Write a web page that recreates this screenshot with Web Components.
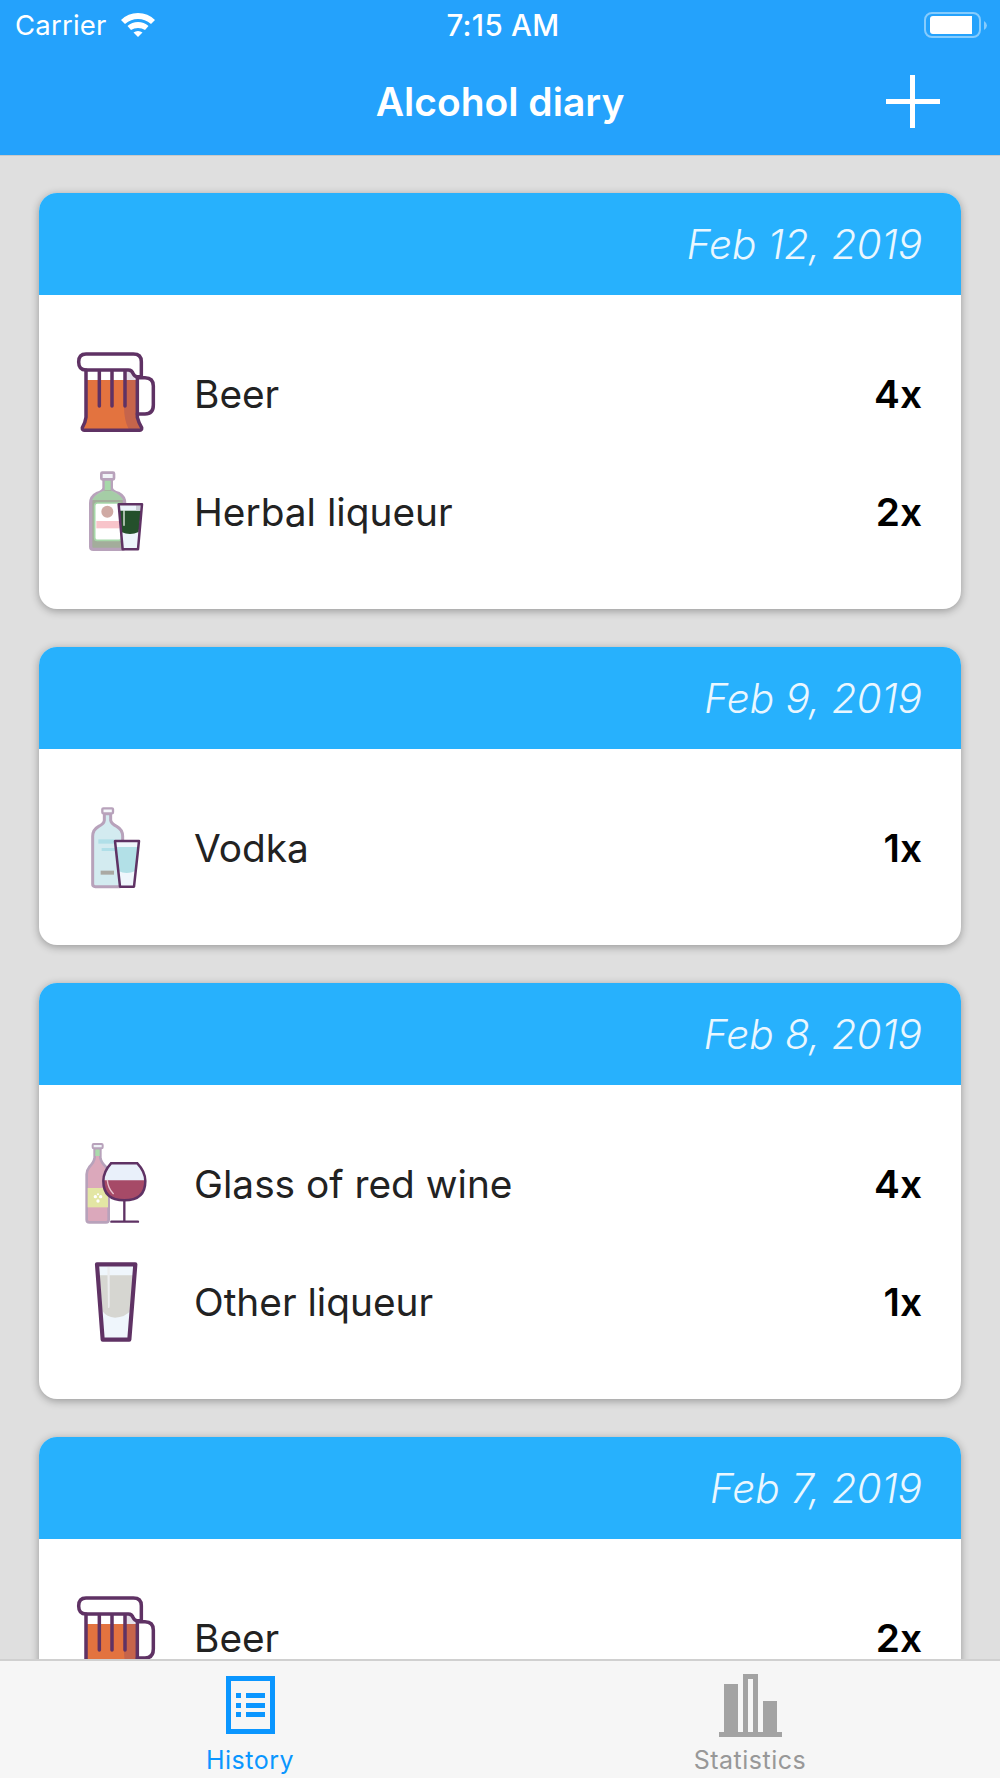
<!DOCTYPE html>
<html>
<head>
<meta charset="utf-8">
<title>Alcohol diary</title>
<style>
  html, body { margin: 0; padding: 0; background: #dfdfdf; }
  body { font-family: "Inter", "Liberation Sans", sans-serif; }
</style>
</head>
<body>
<diary-app>
  <diary-header slot="header" title="Alcohol diary"></diary-header>

  <diary-card date="Feb 12, 2019">
    <diary-row icon="beer" name="Beer" count="4x"></diary-row>
    <diary-row icon="herbal" name="Herbal liqueur" count="2x"></diary-row>
  </diary-card>
  <diary-card date="Feb 9, 2019">
    <diary-row icon="vodka" name="Vodka" count="1x"></diary-row>
  </diary-card>
  <diary-card date="Feb 8, 2019">
    <diary-row icon="wine" name="Glass of red wine" count="4x"></diary-row>
    <diary-row icon="other" name="Other liqueur" count="1x"></diary-row>
  </diary-card>
  <diary-card date="Feb 7, 2019">
    <diary-row icon="beer" name="Beer" count="2x"></diary-row>
  </diary-card>

  <diary-tabs slot="tabs">
    <diary-tab label="History" icon="history" active></diary-tab>
    <diary-tab label="Statistics" icon="stats"></diary-tab>
  </diary-tabs>
</diary-app>

<script>
const PURPLE = '#5f3264';
const LILAC = '#b8a2bb';

// icons are drawn in the coordinates of a 270 unit box (3 units = 1px)
const DRINKS = {
  beer: `<svg viewBox="63 54 270 270">
    <path d="M108 150H262V262L275 297H95L108 262Z" fill="#e3733f"/>
    <path d="M222 150H262V262L275 297H236Q222 270 222 230Z" fill="#c6644b"/>
    <path d="M228 124H245L256 150H228Z" fill="#e4dfe9"/>
    <g fill="none" stroke="${PURPLE}" stroke-width="10.500" stroke-linecap="round" stroke-linejoin="round">
      <path d="M108 120V262Q106 278 97 293Q96 301 104 301H268Q276 301 275 293Q266 278 262 262V140"/>
      <path d="M262 143H285Q310 143 310 168V225Q310 252 285 252H262"/>
      <path d="M108 120H235Q246 120 250 132Q254 140 262 140H274V95Q274 72 250 72H108Q86 72 86 96Q86 120 108 120"/>
      <path d="M148 124V228M186 124V228M225 124V228"/>
    </g>
  </svg>`,
  herbal: `<svg viewBox="63 408 270 270">
    <path d="M162 446H184V474Q186 484 205 490Q224 500 224 520V650Q224 658 215 658H130Q122 658 122 650V520Q122 500 142 490Q160 484 162 474Z" fill="#a3ad9b" stroke="${LILAC}" stroke-width="10" stroke-linejoin="round"/>
    <path d="M164 446H182V480H164Z" fill="#a6d8a9"/>
    <path d="M126 510Q135 492 160 482H186Q210 492 220 510Z" fill="#a6d8a9" opacity=".75"/>
    <rect x="154" y="428" width="38" height="20" rx="3" fill="#f1f4f8" stroke="${LILAC}" stroke-width="8"/>
    <rect x="134" y="519" width="80" height="112" rx="8" fill="#fff" stroke="#a6d8a9" stroke-width="5"/>
    <circle cx="172" cy="545" r="18" fill="#cfaaa4"/>
    <rect x="139" y="573" width="70" height="22" fill="#f8c4ca"/>
    <path d="M206 523H276L264 658H218Z" fill="#edf4fb"/>
    <path d="M209 542H273L266 606Q240 618 214 606Z" fill="#24502b"/>
    <path d="M258 526H273L272 542H258Z" fill="#c9ced6"/>
    <path d="M222 542V586" stroke="#e8f1e8" stroke-width="4" stroke-linecap="round"/>
    <path d="M206 523H276L264 658H218Z" fill="none" stroke="${PURPLE}" stroke-width="7.500" stroke-linejoin="round"/>
  </svg>`,
  vodka: `<svg viewBox="63 33 270 270">
    <path d="M163 68H182V88Q184 98 200 106Q218 116 218 136V280Q218 287 210 287H136Q128 287 128 280V136Q128 116 146 106Q162 98 163 88Z" fill="#d3ebf0" stroke="${LILAC}" stroke-width="9" stroke-linejoin="round"/>
    <rect x="157" y="52" width="32" height="15" rx="3" fill="#f4f8fb" stroke="${LILAC}" stroke-width="7"/>
    <rect x="145" y="145" width="48" height="13" fill="#b0dfe8"/>
    <rect x="155" y="171" width="40" height="9" fill="#b0dfe8"/>
    <rect x="152" y="239" width="40" height="12" fill="#aaa9a3"/>
    <path d="M195 150H267L252 287H210Z" fill="#eff6fc"/>
    <path d="M198 168H264L256 240Q230 252 205 240Z" fill="#b2e0e7"/>
    <path d="M195 150H267L252 287H210Z" fill="none" stroke="${PURPLE}" stroke-width="7.500" stroke-linejoin="round"/>
  </svg>`,
  wine: `<svg viewBox="63 21 270 270">
    <path d="M134 52H151V80Q153 94 168 108Q176 118 176 130V266Q176 274 168 274H118Q110 274 110 266V130Q110 118 118 108Q132 94 134 80Z" fill="#dba8bb" stroke="${LILAC}" stroke-width="8" stroke-linejoin="round"/>
    <rect x="136" y="55" width="13" height="20" fill="#a9dbab"/>
    <rect x="128" y="39" width="30" height="13" rx="3" fill="#eef2f6" stroke="${LILAC}" stroke-width="6"/>
    <rect x="113" y="171" width="61" height="58" fill="#e3e6a4"/>
    <g fill="#fff"><circle cx="136" cy="197" r="5"/><circle cx="152" cy="197" r="5"/><circle cx="144" cy="210" r="5"/><circle cx="144" cy="190" r="3"/></g>
    <path d="M183 97H262Q286 122 286 150Q286 208 223 208Q160 208 160 150Q160 122 183 97Z" fill="#e9f0fa"/>
    <path d="M160 148H286Q286 208 223 208Q160 208 160 148Z" fill="#a64a67"/>
    <path d="M172 148Q174 172 190 188" fill="none" stroke="#e9c3cf" stroke-width="4" stroke-linecap="round"/>
    <path d="M183 97H262Q286 122 286 150Q286 208 223 208Q160 208 160 150Q160 122 183 97Z" fill="none" stroke="${PURPLE}" stroke-width="7.500"/>
    <path d="M223 208V272M184 272H264" fill="none" stroke="${PURPLE}" stroke-width="7" stroke-linecap="round"/>
  </svg>`,
  other: `<svg viewBox="63 375 270 270">
    <path d="M141 400H256L238 626H158Z" fill="#eff6fc"/>
    <path d="M148 433H249L243 538Q225 560 195 560Q170 558 157 540Z" fill="#d6d6d1"/>
    <path d="M172 408H179V524Q179 534 174 530Z" fill="#ecedee"/>
    <path d="M141 400H256L238 626H158Z" fill="none" stroke="${PURPLE}" stroke-width="12.500" stroke-linejoin="round"/>
  </svg>`
};

const TAB_ICONS = {
  history: `<svg style="margin-bottom:3px" width="49" height="58" viewBox="0 0 49 58" fill="#0a96ff">
    <path fill-rule="evenodd" d="M0 0H49V58H0ZM5 5V53H44V5Z"/>
    <path d="M10 17H15V22H10ZM20 17H39V22H20ZM10 27H15V32H10ZM20 27H39V32H20ZM10 36H15V41H10ZM20 36H39V41H20Z"/>
  </svg>`,
  stats: `<svg width="63" height="63" viewBox="0 0 63 63" fill="#a3a3a3">
    <path d="M0 58H63V63H0ZM5 10H19V58H5ZM44 27H58V58H44Z"/>
    <path fill-rule="evenodd" d="M24 0H39V58H24ZM29 5V58H34V5Z"/>
  </svg>`
};

customElements.define('diary-app', class extends HTMLElement {
  constructor() {
    super();
    this.attachShadow({mode: 'open'}).innerHTML = `
      <style>
        :host { display: flex; flex-direction: column; width: 1000px; height: 1778px; overflow: hidden; background: #dfdfdf; }
        main { flex: 1; min-height: 0; overflow: hidden; padding: 38px 39px 0; display: flex; flex-direction: column; gap: 38px; }
      </style>
      <slot name="header"></slot>
      <main><slot></slot></main>
      <slot name="tabs"></slot>
    `;
  }
});

customElements.define('diary-header', class extends HTMLElement {
  constructor() {
    super();
    this.attachShadow({mode: 'open'}).innerHTML = `
      <style>
        :host { display: block; height: 155px; background: #24a2fc; color: #fff; flex: none; box-shadow: 0 1px 0 #c9c9c9; position: relative; }
        .status { height: 53px; box-sizing: border-box; display: grid; grid-template-columns: 1fr auto 1fr; align-items: center; padding: 0 12px 3px 15px; font-size: 27.500px; }
        .left { display: flex; align-items: center; gap: 14px; letter-spacing: .2px; }
        .time { font-size: 29.500px; font-weight: 500; letter-spacing: .3px; margin-left: 3px; }
        .right { display: flex; justify-content: flex-end; }
        .nav { height: 102px; display: grid; grid-template-columns: 1fr auto 1fr; align-items: center; }
        .nav h1 { margin: 0; font-size: 39px; font-weight: 600; margin-bottom: 5px; }
        .plus { justify-self: end; margin: 0 60px 6px 0; display: block; }
      </style>
      <div class="status">
        <div class="left">Carrier
          <svg width="34" height="24" viewBox="0 0 34 24" fill="#fff">
            <path d="M17 0Q27 0 34 7L30 11Q24 6 17 6Q10 6 4 11L0 7Q7 0 17 0Z"/>
            <path d="M17 9Q23 9 27.5 13L24 17Q21 15 17 15Q13 15 10 17L6.5 13Q11 9 17 9Z"/>
            <path d="M17 18Q19.500 18 21.500 19.500L17 24L12.500 19.500Q14.500 18 17 18Z"/>
          </svg>
        </div>
        <div class="time">7:15 AM</div>
        <div class="right">
          <svg width="64" height="26" viewBox="0 0 64 26">
            <rect x="1" y="1" width="55" height="24" rx="7" fill="none" stroke="#fff" stroke-opacity=".45" stroke-width="2"/>
            <path d="M6 7Q6 4 9 4H48V22H9Q6 22 6 19Z" fill="#fff"/>
            <path d="M60 9Q63 11 63 13.500Q63 16 60 18Z" fill="#fff" fill-opacity=".45"/>
          </svg>
        </div>
      </div>
      <div class="nav">
        <span></span>
        <h1>${this.getAttribute('title')}</h1>
        <svg class="plus" width="54" height="53" viewBox="0 0 54 53" fill="#fff"><path d="M24 0H29V24H54V29H29V53H24V29H0V24H24Z"/></svg>
      </div>
    `;
  }
});

customElements.define('diary-card', class extends HTMLElement {
  constructor() {
    super();
    this.attachShadow({mode: 'open'}).innerHTML = `
      <style>
        :host { display: block; flex: none; background: #fff; border-radius: 18px; box-shadow: 0 2px 8px rgba(0,0,0,.32); }
        header { height: 102px; box-sizing: border-box; background: #27b1fd; border-radius: 18px 18px 0 0; padding: 0 39px; display: flex; align-items: center; justify-content: flex-end; color: #eaf7ff; font-size: 40.600px; font-style: italic; font-weight: 300; }
        .rows { padding: 39px 0; }
      </style>
      <header>${this.getAttribute('date')}</header>
      <div class="rows"><slot></slot></div>
    `;
  }
});

customElements.define('diary-row', class extends HTMLElement {
  constructor() {
    super();
    this.attachShadow({mode: 'open'}).innerHTML = `
      <style>
        :host { display: flex; align-items: center; height: 118px; padding: 0 39px 0 32px; color: #222; font-size: 38.800px; }
        .icon { width: 90px; height: 90px; flex: none; margin-right: 33px; }
        .icon svg { display: block; width: 90px; height: 90px; }
        .name { flex: 1; }
        .count { color: #000; font-weight: 600; }
      </style>
      <div class="icon">${DRINKS[this.getAttribute('icon')]}</div>
      <div class="name">${this.getAttribute('name')}</div>
      <div class="count">${this.getAttribute('count')}</div>
    `;
  }
});

customElements.define('diary-tabs', class extends HTMLElement {
  constructor() {
    super();
    this.attachShadow({mode: 'open'}).innerHTML = `
      <style>
        :host { display: grid; grid-template-columns: 1fr 1fr; height: 119px; box-sizing: border-box; flex: none; background: #f6f6f6; border-top: 2px solid #d0d0d0; position: relative; }
      </style>
      <slot></slot>
    `;
  }
});

customElements.define('diary-tab', class extends HTMLElement {
  constructor() {
    super();
    const active = this.hasAttribute('active');
    this.attachShadow({mode: 'open'}).innerHTML = `
      <style>
        :host { display: flex; flex-direction: column; align-items: center; color: ${active ? '#0a96ff' : '#989898'}; font-size: 25px; letter-spacing: .5px; }
        .icon { height: 63px; margin-top: 13px; display: flex; align-items: flex-end; }
        svg { display: block; }
        .label { margin-top: 8px; }
      </style>
      <div class="icon">${TAB_ICONS[this.getAttribute('icon')]}</div>
      <div class="label">${this.getAttribute('label')}</div>
    `;
  }
});
</script>
</body>
</html>
